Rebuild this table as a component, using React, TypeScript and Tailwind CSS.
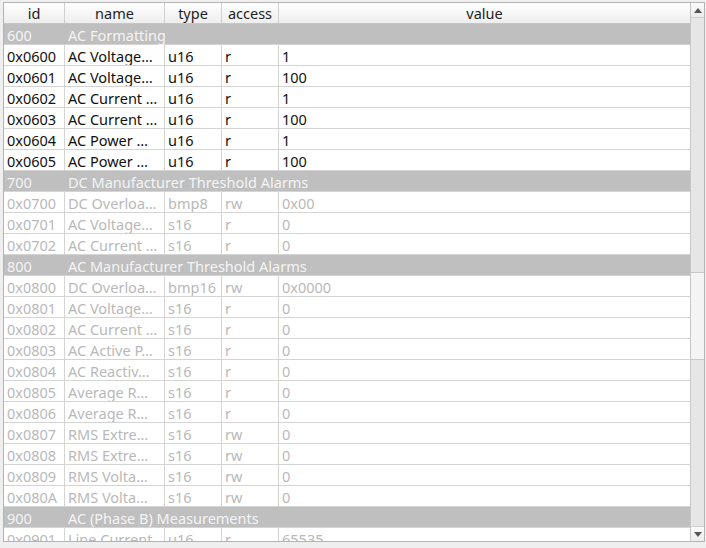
type Row =
  | { kind: 'group'; id: string; title: string }
  | { kind: 'reg'; id: string; name: string; type: string; access: string; value: string; enabled: boolean };

const g = (id: string, title: string): Row => ({ kind: 'group', id, title });
const r = (id: string, name: string, type: string, access: string, value: string, enabled = false): Row => ({
  kind: 'reg', id, name, type, access, value, enabled,
});

const rows: Row[] = [
  g('600', 'AC Formatting'),
  r('0x0600', 'AC Voltage…', 'u16', 'r', '1', true),
  r('0x0601', 'AC Voltage…', 'u16', 'r', '100', true),
  r('0x0602', 'AC Current …', 'u16', 'r', '1', true),
  r('0x0603', 'AC Current …', 'u16', 'r', '100', true),
  r('0x0604', 'AC Power …', 'u16', 'r', '1', true),
  r('0x0605', 'AC Power …', 'u16', 'r', '100', true),
  g('700', 'DC Manufacturer Threshold Alarms'),
  r('0x0700', 'DC Overloa…', 'bmp8', 'rw', '0x00'),
  r('0x0701', 'AC Voltage…', 's16', 'r', '0'),
  r('0x0702', 'AC Current …', 's16', 'r', '0'),
  g('800', 'AC Manufacturer Threshold Alarms'),
  r('0x0800', 'DC Overloa…', 'bmp16', 'rw', '0x0000'),
  r('0x0801', 'AC Voltage…', 's16', 'r', '0'),
  r('0x0802', 'AC Current …', 's16', 'r', '0'),
  r('0x0803', 'AC Active P…', 's16', 'r', '0'),
  r('0x0804', 'AC Reactiv…', 's16', 'r', '0'),
  r('0x0805', 'Average R…', 's16', 'r', '0'),
  r('0x0806', 'Average R…', 's16', 'r', '0'),
  r('0x0807', 'RMS Extre…', 's16', 'rw', '0'),
  r('0x0808', 'RMS Extre…', 's16', 'rw', '0'),
  r('0x0809', 'RMS Volta…', 's16', 'rw', '0'),
  r('0x080A', 'RMS Volta…', 's16', 'rw', '0'),
  g('900', 'AC (Phase B) Measurements'),
  r('0x0901', 'Line Current', 'u16', 'r', '65535'),
];

// cells sit 1px low, like the Qt view
const cell = 'h-full flex items-center pt-[2px] px-[3px] whitespace-nowrap overflow-hidden border-r border-[#d4d4d4]';

function Header() {
  const h = 'h-full flex items-center justify-center pt-[1px] border-r border-[#d0d0d0]';
  return (
    <div className="flex h-[21px] shrink-0 border-b border-[#c6c6c6] bg-gradient-to-b from-[#ffffff] to-[#eeeeee] text-[#1e1e1e]">
      <div className={`${h} w-[61px]`}>id</div>
      <div className={`${h} w-[100px]`}>name</div>
      <div className={`${h} w-[57px]`}>type</div>
      <div className={`${h} w-[57px]`}>access</div>
      <div className="h-full flex-1 flex items-center justify-center pt-[1px]">value</div>
    </div>
  );
}

function TableRow({ row }: { row: Row }) {
  if (row.kind === 'group') {
    return (
      <div className="flex h-[21px] shrink-0 bg-[#bfbfbf] text-[#f4f4f4] border-b border-[#d4d4d4]">
        <div className="h-full flex items-center pt-[2px] px-[3px] w-[61px]">{row.id}</div>
        <div className="h-full flex items-center pt-[2px] px-[3px] flex-1 whitespace-nowrap">{row.title}</div>
      </div>
    );
  }
  const color = row.enabled ? 'text-[#111111]' : 'text-[#b9b9b9]';
  return (
    <div className={`flex h-[21px] shrink-0 bg-white border-b border-[#d4d4d4] ${color}`}>
      <div className={`${cell} w-[61px]`}>{row.id}</div>
      <div className={`${cell} w-[100px]`}>{row.name}</div>
      <div className={`${cell} w-[57px]`}>{row.type}</div>
      <div className={`${cell} w-[57px]`}>{row.access}</div>
      <div className="h-full flex-1 flex items-center pt-[2px] px-[3px]">{row.value}</div>
    </div>
  );
}

function Scrollbar() {
  return (
    <div className="w-[14px] shrink-0 flex flex-col bg-[#e6e6e6] border-l border-[#c8c8c8]">
      <div className="h-[15px] shrink-0 flex items-center justify-center bg-gradient-to-b from-[#fafafa] to-[#ececec] border-b border-[#cfcfcf]">
        <svg width="8" height="5" viewBox="0 0 8 5"><path d="M4 0 L8 5 L0 5 Z" fill="#555" /></svg>
      </div>
      <div className="h-[254px] shrink-0" />
      <div className="h-[88px] shrink-0 bg-[#f4f4f4] border-y border-[#c8c8c8]" />
      <div className="flex-1" />
      <div className="h-[15px] shrink-0 flex items-center justify-center bg-gradient-to-b from-[#fafafa] to-[#ececec] border-t border-[#cfcfcf]">
        <svg width="8" height="5" viewBox="0 0 8 5"><path d="M0 0 L8 0 L4 5 Z" fill="#555" /></svg>
      </div>
    </div>
  );
}

export default function App() {
  return (
    <div className="w-[706px] h-[548px] bg-[#efefef] pt-[2px] pl-[3px] pr-[1px] text-[14.5px] leading-none" style={{ fontFamily: '"Noto Sans", "DejaVu Sans", sans-serif' }}>
      <div className="h-[540px] flex border border-[#b4b4b4] bg-white overflow-hidden">
        <div className="flex-1 flex flex-col overflow-hidden">
          <Header />
          {rows.map((row) => (
            <TableRow key={row.id} row={row} />
          ))}
        </div>
        <Scrollbar />
      </div>
    </div>
  );
}
